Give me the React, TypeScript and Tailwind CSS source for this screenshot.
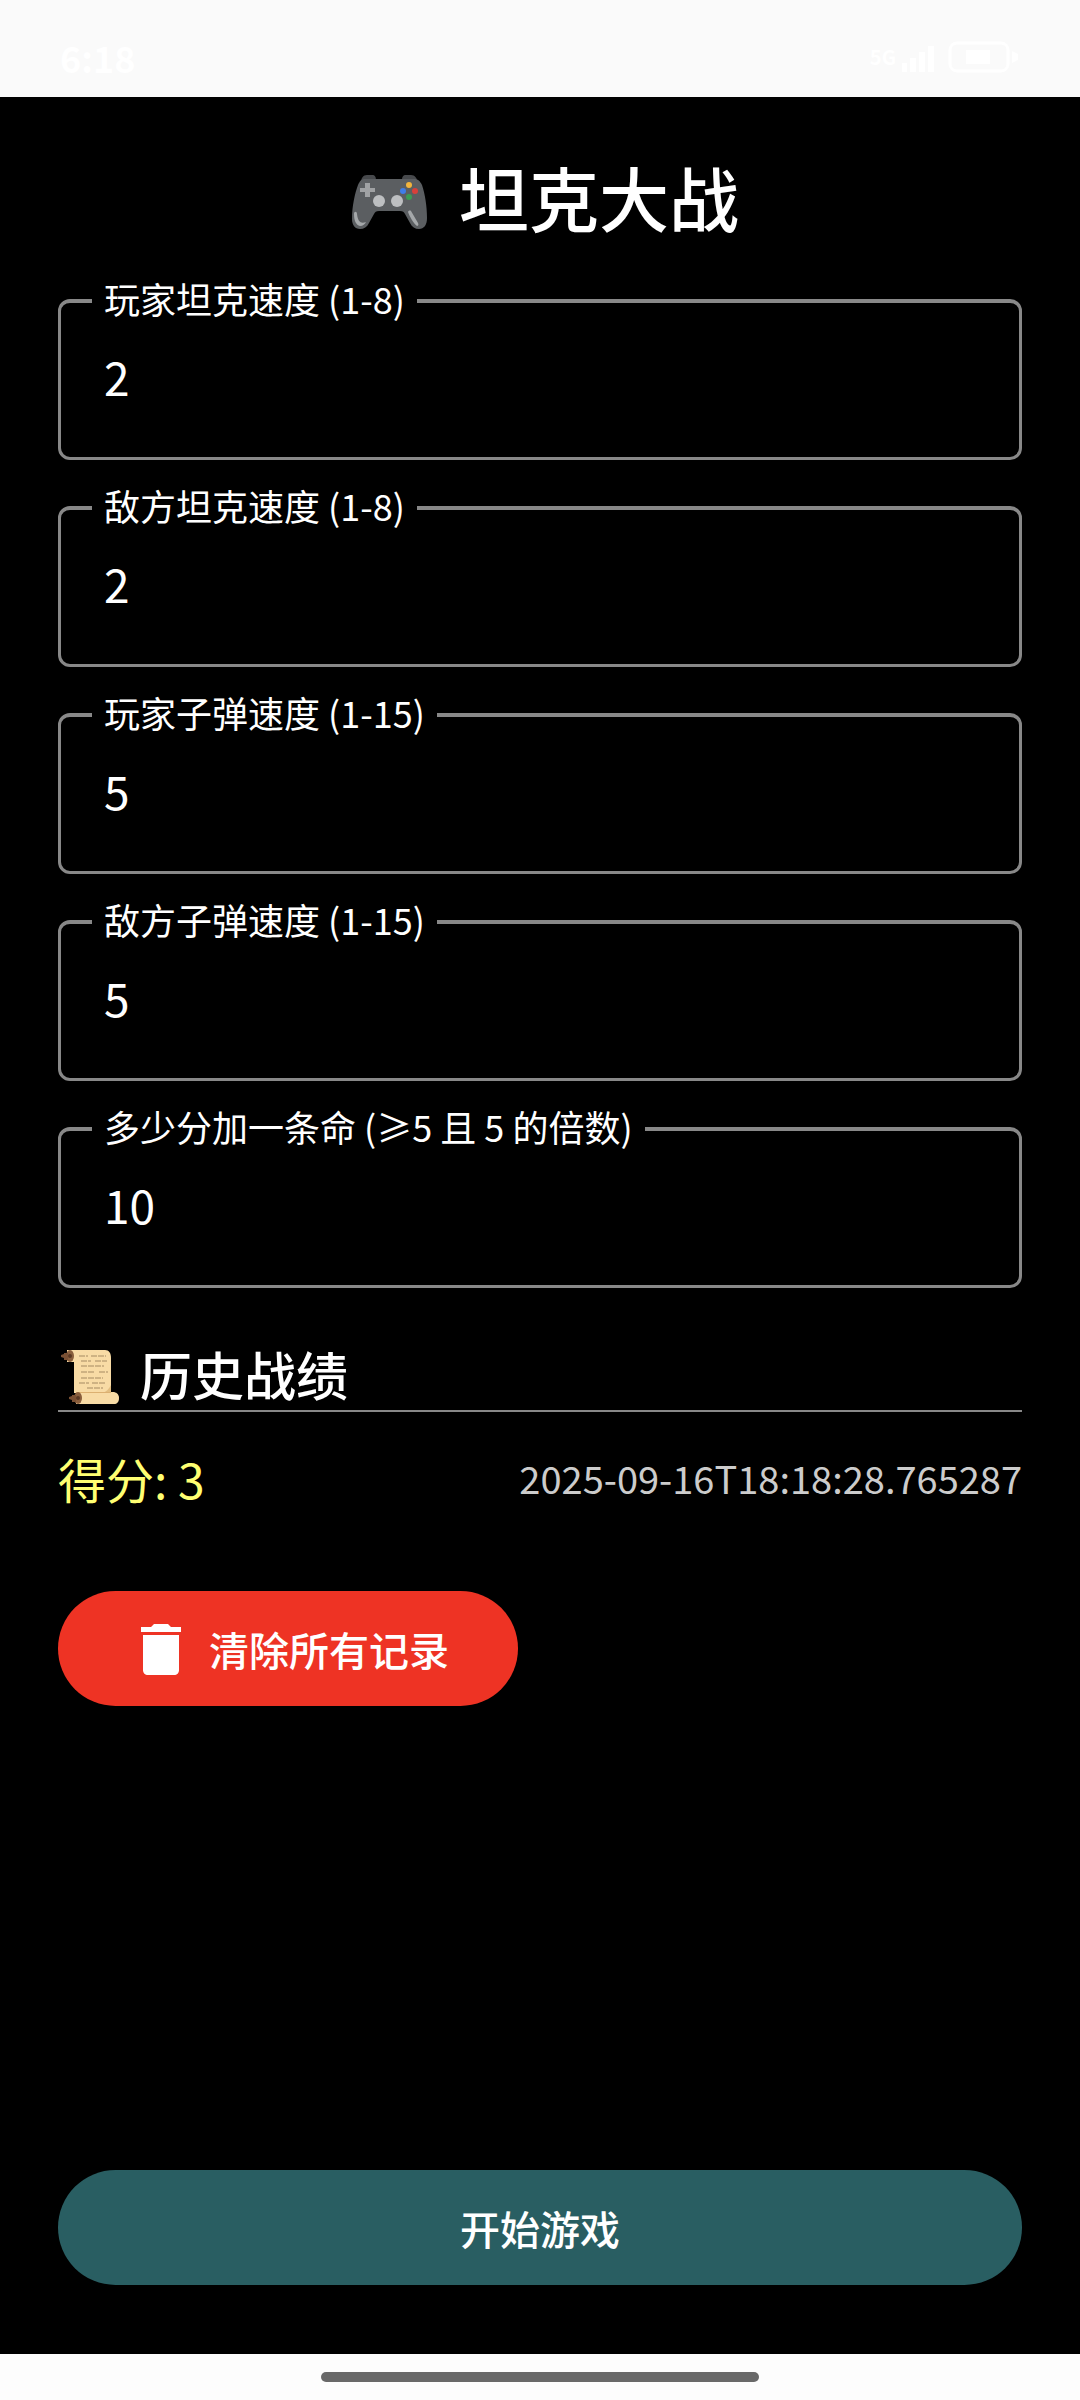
import { useState } from "react";

const SETTINGS = [
  { id: "player-speed", label: "玩家坦克速度 (1-8)", value: "2" },
  { id: "enemy-speed", label: "敌方坦克速度 (1-8)", value: "2" },
  { id: "player-bullet", label: "玩家子弹速度 (1-15)", value: "5" },
  { id: "enemy-bullet", label: "敌方子弹速度 (1-15)", value: "5" },
  { id: "bonus-life", label: "多少分加一条命 (≥5 且 5 的倍数)", value: "10" },
];

const RECORDS = [{ score: 3, time: "2025-09-16T18:18:28.765287" }];

function GamepadIcon() {
  return (
    <svg className="h-[84px] w-[90px] shrink-0" viewBox="0 0 90 84" aria-hidden="true">
      <path d="M20 26c0-5 2-8 6-8h5c3 0 4 2 4 5zM61 23c0-3 1-5 4-5h5c4 0 6 3 7 8z" fill="#47494c" />
      <path
        d="M24 22h49c4 0 6 2 8 6 3 9 5 21 5 33 0 7-3 11-8 11-4 0-7-2-9-6l-5-9c-1-2-2-3-5-3H38c-3 0-4 1-5 3l-5 9c-2 4-5 6-9 6-5 0-8-4-8-10 0-13 3-26 6-34 2-4 3-6 7-6z"
        fill="#5b5e61"
      />
      <path d="M13 57c0 7 2 11 6 12 3 0 5-2 6-4-5 2-8 0-9-8 0-3-3-3-3 0zM67 55c2 5 5 11 9 14 1 0 2-1 1-3l-7-12c-1-1-3 0-3 1z" fill="#a5a8aa" />
      <path d="M24 26h5v5h5v4h-5v5h-5v-5h-5v-4h5z" fill="#a0a2a4" />
      <circle cx="38" cy="44" r="6" fill="#bdbfc1" />
      <circle cx="56" cy="44" r="6" fill="#bdbfc1" />
      <circle cx="68" cy="28" r="3" fill="#f3b43c" />
      <circle cx="62" cy="34" r="3" fill="#3f7de8" />
      <circle cx="74" cy="34" r="3" fill="#d8403a" />
      <circle cx="68" cy="40" r="3" fill="#3b9c52" />
    </svg>
  );
}

function ScrollIcon() {
  return (
    <svg className="h-[72px] w-16 shrink-0" viewBox="0 0 64 72" aria-hidden="true">
      <path d="M9 12h38c4 0 6 3 6 8v35H16V24H9z" fill="#f8dba5" />
      <path d="M53 47v8h-9c4-1 7-4 9-8z" fill="#e2bd80" />
      <ellipse cx="12" cy="18" rx="4" ry="6" fill="#8a5f3d" />
      <path d="M3 17l3-1v-1h4v7H6v-2l-3-1z" fill="#7a5033" />
      <circle cx="12" cy="18" r="2" fill="#5a3823" />
      <path d="M18 54h37c3 0 6 2 6 6s-2 6-5 6H18z" fill="#f8dba5" />
      <path d="M18 54h35v1H18z" fill="#dcb071" />
      <ellipse cx="20" cy="60" rx="4" ry="6" fill="#8a5f3d" />
      <path d="M11 59l3-1v-1h4v7h-4v-2l-3-1z" fill="#7a5033" />
      <circle cx="20" cy="60" r="2" fill="#5a3823" />
      <path
        d="M21 18h9m3 0h15M23 23h10m4 0h12M23 28h23M23 34h14m4 0h9M23 40h22M21 45h10m3 0h14M29 50h16"
        stroke="#a58a63"
        strokeWidth="1"
        strokeDasharray="6 1"
        fill="none"
      />
    </svg>
  );
}

function TrashIcon() {
  return (
    <svg className="h-[52px] w-10 shrink-0" viewBox="0 0 40 52" fill="currentColor" aria-hidden="true">
      <path d="M10 4l3-3h14l3 3h10v5H0V4z" />
      <path d="M2 12h36v35c0 3-2 5-5 5H7c-3 0-5-2-5-5z" />
    </svg>
  );
}

function StatusBar() {
  return (
    <header className="flex h-[97px] items-center justify-between bg-[#fafafa] px-[60px] pt-4 text-white">
      <span className="text-[36px] leading-10 font-bold">6:18</span>
      <div className="flex items-center gap-1">
        <span className="text-[20px] leading-8 font-bold">5G</span>
        <svg className="h-8 w-9" viewBox="0 0 36 32" fill="currentColor" aria-hidden="true">
          <path d="M2 22h5v9H2zM10 17h6v14h-6zM19 11h6v20h-6zM28 5h6v26h-6z" />
        </svg>
        <svg className="ml-2 h-8 w-[72px]" viewBox="0 0 72 32" fill="none" aria-hidden="true">
          <rect x="2" y="2" width="58" height="28" rx="7" stroke="currentColor" strokeWidth="3" />
          <path d="M18 9h24v14H18zM64 10l6 3v6l-6 3z" fill="currentColor" />
        </svg>
      </div>
    </header>
  );
}

function SettingField({ id, label, initial }: { id: string; label: string; initial: string }) {
  const [value, setValue] = useState(initial);
  return (
    <fieldset className="min-w-0 rounded-[12px] border-[3px] border-t-4 border-[#888888] px-[31px] pb-6">
      <legend className="px-3 pb-[6px] text-[36px] leading-[30px]">
        <label htmlFor={id}>{label}</label>
      </legend>
      <input
        id={id}
        inputMode="numeric"
        value={value}
        onChange={(e) => setValue(e.target.value)}
        className="block h-[114px] w-full bg-transparent px-3 text-[46px] outline-none"
      />
    </fieldset>
  );
}

export default function App() {
  const [records, setRecords] = useState(RECORDS);
  return (
    <div className="flex min-h-screen flex-col bg-black font-['Noto_Sans_CJK_SC',sans-serif] text-white">
      <StatusBar />
      <main className="flex flex-1 flex-col px-[58px] pt-[60px] pb-[69px]">
        <h1 className="flex items-center justify-center gap-7 text-[70px] leading-[84px] font-medium">
          <GamepadIcon />
          <span className="pb-1 leading-[80px]">坦克大战</span>
        </h1>
        <form className="mt-[42px] flex flex-col gap-[30px]">
          {SETTINGS.map((s) => (
            <SettingField key={s.id} id={s.id} label={s.label} initial={s.value} />
          ))}
        </form>
        <section className="mt-[50px]">
          <h2 className="flex items-center gap-[18px] border-b-2 border-[#888888] text-[52px] leading-[72px] font-medium">
            <ScrollIcon />
            历史战绩
          </h2>
          <ul className="mt-9">
            {records.map((r) => (
              <li key={r.time} className="flex items-center justify-between">
                <span className="text-[48px] leading-[60px] text-[#ffff72]">得分: {r.score}</span>
                <time className="text-[38px] leading-[60px] text-[#cccccc]">{r.time}</time>
              </li>
            ))}
          </ul>
          <button
            type="button"
            onClick={() => setRecords([])}
            className="mt-[83px] flex h-[115px] items-center gap-7 rounded-full bg-[#ee3324] pr-[69px] pl-[83px] text-[40px] font-medium"
          >
            <TrashIcon />
            清除所有记录
          </button>
        </section>
        <button type="button" className="mt-auto h-[115px] w-full rounded-full bg-[#295e62] text-[40px] font-medium">
          开始游戏
        </button>
      </main>
      <footer className="flex h-[46px] items-center justify-center bg-[#fdfdfd]">
        <div className="h-[10px] w-[438px] rounded-full bg-[#696969]" />
      </footer>
    </div>
  );
}
